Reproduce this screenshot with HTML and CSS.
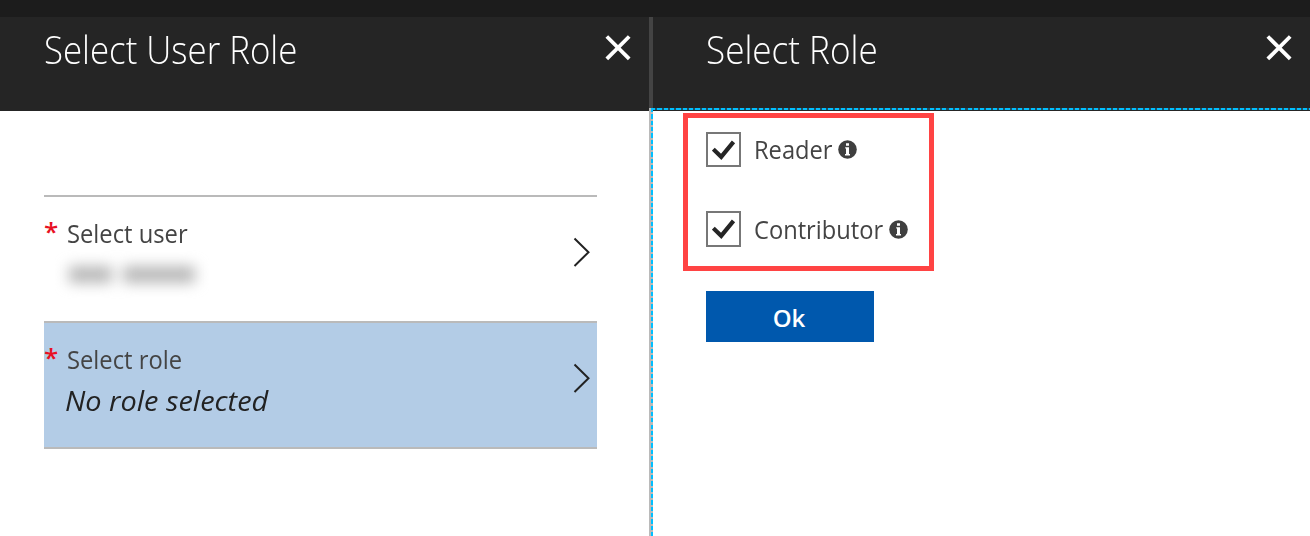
FILE: index.html
```html
<!DOCTYPE html>
<html lang="en">
<head>
<meta charset="utf-8">
<title>Select User Role</title>
<link rel="stylesheet" href="styles.css">
</head>
<body>
<div class="topbar"></div>
<main class="blades">
  <section class="blade blade-user">
    <header class="blade-header">
      <h1 class="title title-user">Select User Role</h1>
      <svg class="close" width="26" height="26" viewBox="0 0 26 26"><path d="M1.8 1.5 24.2 23.9M24.2 1.5 1.8 23.9"/></svg>
    </header>
    <div class="picker-list">
      <div class="picker">
        <span class="required">*</span>
        <div class="picker-text">
          <div class="label">Select user</div>
          <div class="redacted"><span class="smudge smudge-short"></span><span class="smudge smudge-long"></span></div>
        </div>
        <svg class="chevron" width="18" height="30" viewBox="0 0 18 30"><path d="M1.5 1.5 15.5 15.2 1.5 29"/></svg>
      </div>
      <div class="picker selected">
        <span class="required">*</span>
        <div class="picker-text">
          <div class="label">Select role</div>
          <div class="value">No role selected</div>
        </div>
        <svg class="chevron" width="18" height="30" viewBox="0 0 18 30"><path d="M1.5 1.5 15.5 15.2 1.5 29"/></svg>
      </div>
    </div>
  </section>
  <div class="divider"><div class="divider-head"></div><div class="divider-body"></div></div>
  <section class="blade blade-role">
    <header class="blade-header">
      <h1 class="title title-role">Select Role</h1>
      <svg class="close" width="26" height="26" viewBox="0 0 26 26"><path d="M1.8 1.5 24.2 23.9M24.2 1.5 1.8 23.9"/></svg>
    </header>
    <div class="options">
      <div class="option">
        <span class="checkbox"><svg width="24" height="20" viewBox="0 0 24 20"><path d="M1.3 9.2 9.2 16.8 21.5 1.8"/></svg></span>
        <span class="option-label reader">Reader</span>
        <svg class="info" width="19" height="19" viewBox="0 0 19 19"><circle cx="9.5" cy="9.5" r="9.3"/><path d="M8 3.2h3v2.5H8zM7.2 7.2h3.8v6.9h1v1.4H7v-1.4h1V8.6h-.8z"/></svg>
      </div>
      <div class="option option-tall">
        <span class="checkbox"><svg width="24" height="20" viewBox="0 0 24 20"><path d="M1.3 9.2 9.2 16.8 21.5 1.8"/></svg></span>
        <span class="option-label contributor">Contributor</span>
        <svg class="info" width="19" height="19" viewBox="0 0 19 19"><circle cx="9.5" cy="9.5" r="9.3"/><path d="M8 3.2h3v2.5H8zM7.2 7.2h3.8v6.9h1v1.4H7v-1.4h1V8.6h-.8z"/></svg>
      </div>
    </div>
    <button class="ok">Ok</button>
    <div class="focus-line"></div>
  </section>
</main>
</body>
</html>
```
FILE: styles.css
```css
* { box-sizing: border-box; }
body {
  margin: 0;
  height: 536px;
  overflow: hidden;
  background: #fff;
  color: #444;
  font-family: "Open Sans", "Noto Sans", sans-serif;
}
svg { display: block; flex: none; }
.topbar { height: 17px; background: #1c1c1c; }
.blades { display: flex; height: 519px; }
.blade-user { width: 649px; }
.blade-role { position: relative; flex: 1; }
.blade-header {
  display: flex;
  justify-content: space-between;
  height: 94px;
  padding: 18px 18px 0 44px;
  background: #252525;
}
.blade-role .blade-header { padding-left: 53px; }
.title {
  margin: -12px 0 0;
  color: #fff;
  font-size: 38px;
  font-weight: 300;
  line-height: 52px;
  white-space: nowrap;
  transform-origin: left;
}
.title-user { transform: scaleX(.916); }
.title-role { transform: scaleX(.923); }
.close path { stroke: #fff; stroke-width: 3.8; fill: none; }

.picker-list { margin: 84px 52px 0 44px; border-bottom: 2px solid #bababa; }
.picker {
  display: flex;
  height: 126px;
  padding: 23px 6px 0 0;
  border-top: 2px solid #bababa;
}
.selected { background: #b3cce6; }
.required {
  width: 23px;
  margin-top: -5px;
  color: #e81123;
  font-size: 26px;
  font-weight: 600;
  line-height: 32px;
}
.picker-text { flex: 1; }
.label {
  margin-top: -2px;
  font-size: 25px;
  line-height: 30px;
  white-space: nowrap;
  transform: scaleX(.95);
  transform-origin: left;
}
.value {
  margin: 6px 0 0 -2px;
  color: #222;
  font-size: 28px;
  font-style: italic;
  line-height: 40px;
  white-space: nowrap;
  transform: scaleX(1.032);
  transform-origin: left;
}
/* Hidden user name, shown only as two smudges */
.redacted {
  display: flex;
  gap: 11px;
  margin: 18px 0 0 2px;
  filter: blur(7px);
}
.smudge { height: 17px; background: #b8b8b8; }
.smudge-short { width: 43px; }
.smudge-long { width: 72px; }
.chevron { margin-top: 17px; }
.chevron path { fill: none; stroke: #222; stroke-width: 2; }

.divider { display: flex; flex-direction: column; width: 4px; }
.divider-head { height: 91px; background: #444; }
.divider-body {
  flex: 1;
  background:
    repeating-linear-gradient(#00bfff 0 4.3px, #bababa 4.3px 6.33px) 2px 0 / 2px 100% no-repeat,
    linear-gradient(#bababa, #bababa) 0 0 / 2px 100% no-repeat;
}
.focus-line {
  position: absolute;
  top: 91px;
  left: -2px;
  right: 0;
  height: 2px;
  background: repeating-linear-gradient(90deg, #00bfff 0 4.3px, #20505f 4.3px 6.33px);
}
.options {
  display: flex;
  flex-direction: column;
  gap: 44px;
  width: 251px;
  height: 158px;
  margin: 2px 0 0 30px;
  padding: 14px 0 0 18px;
  border: 5px solid #ff4343;
}
.option { display: flex; height: 35px; align-items: center; }
.option-tall { height: 36px; }
.checkbox {
  display: flex;
  width: 35px;
  height: 100%;
  align-items: center;
  justify-content: center;
  border: 2px solid #777;
}
.checkbox path { fill: none; stroke: #252525; stroke-width: 4.2; }
.option-label {
  margin-left: 13px;
  font-size: 25px;
  line-height: 35px;
  white-space: nowrap;
  transform: scaleX(.947);
  transform-origin: left;
}
.reader { width: 84px; }
.contributor { width: 135px; }
.info circle { fill: #3f3f3f; }
.info path { fill: #fff; }
.ok {
  display: block;
  width: 168px;
  height: 51px;
  margin: 20px 0 0 53px;
  padding: 2px 2px 0 0;
  border: 0;
  background: #0058ad;
  color: #fff;
  font: 600 24px "Open Sans", "Noto Sans", sans-serif;
}
```
